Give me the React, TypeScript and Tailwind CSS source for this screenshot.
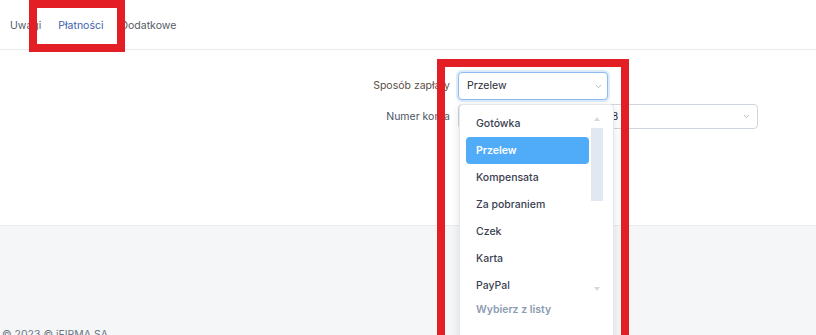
import { ChevronDown } from "lucide-react"

const options = ["Gotówka", "Przelew", "Kompensata", "Za pobraniem", "Czek", "Karta", "PayPal"]

export default function App() {
  const selected = "Przelew"

  return (
    <div className="relative w-[816px] h-[335px] overflow-hidden bg-white font-['Inter',sans-serif] text-[10.5px]">
      {/* Tabs */}
      <div className="flex h-[50px] items-center border-b border-[#e9e9ee] pl-[10px] pt-[3px] text-[#555b66]">
        <span>Uwagi</span>
        <span className="ml-[17px] text-[#3d5fae]">Płatności</span>
        <span className="ml-[17px]">Dodatkowe</span>
      </div>

      {/* Form */}
      <div className="h-[176px] border-b border-[#e9e9ee] pt-[22px]">
        <div className="grid grid-cols-[450px_auto] items-center gap-x-[8px] gap-y-[4px]">
          <label className="text-right text-[#5c4f45]">Sposób zapłaty</label>
          <div className="flex h-[28px] w-[150px] items-center justify-between rounded-[4px] border border-[#8dbbef] bg-white pl-[8px] pr-[4px] shadow-[0_0_0_2px_#dcebfb]">
            <span className="text-[#1f2733]">{selected}</span>
            <ChevronDown size={9} className="text-[#9aa3ad]" />
          </div>
          <label className="text-right text-[#4b5563]">Numer konta</label>
          <div className="flex h-[25px] w-[300px] items-center justify-between rounded-[4px] border border-[#cfd6de] bg-white pl-[8px] pr-[6px]">
            <span className="text-[#2b2f36]">
              PL 1020 1026 0000 1502 0268 <span className="text-[#c5ced8]">-</span>
            </span>
            <ChevronDown size={9} className="text-[#9aa3ad]" />
          </div>
        </div>
      </div>

      {/* Footer area */}
      <div className="h-[110px] bg-[#f5f6f8] pl-[2px] pt-[101px] text-[#6b7785]">
        <span>© 2023 © iFIRMA SA</span>
      </div>

      {/* Dropdown list */}
      <div className="absolute left-[459px] top-[104px] flex h-[240px] w-[155px] rounded-[4px] border border-[#e4e7eb] bg-white shadow-[0_2px_8px_rgba(15,23,42,0.12)]">
        <div className="flex w-[131px] flex-col pl-[6px] pr-[2px] pt-[5px]">
          {options.map((o) => (
            <div
              key={o}
              className={
                o === selected
                  ? "flex h-[27px] items-center rounded-[4px] bg-[#50acf8] pl-[10px] font-semibold text-white"
                  : "flex h-[27px] items-center pl-[10px] font-medium text-[#3a4150]"
              }
            >
              {o}
            </div>
          ))}
          <div className="flex h-[22px] items-center pl-[10px] font-semibold text-[#8b9bb0]">Wybierz z listy</div>
        </div>
        <div className="relative w-[12px]">
          <div className="absolute left-[3px] top-[12px] h-0 w-0 border-x-[3px] border-b-[4px] border-x-transparent border-b-[#d5dbe3]" />
          <div className="absolute left-0 top-[23px] h-[73px] w-[12px] bg-[#e2e8f0]" />
          <div className="absolute left-[3px] top-[182px] h-0 w-0 border-x-[3px] border-t-[4px] border-x-transparent border-t-[#d5dbe3]" />
        </div>
      </div>

      {/* Annotation boxes */}
      <div className="absolute left-[29px] top-0 h-[52px] w-[96px] border-[8px] border-[#e41e25]" />
      <div className="absolute left-[437px] top-[59px] h-[285px] w-[192px] border-[8px] border-[#e41e25]" />
    </div>
  )
}
